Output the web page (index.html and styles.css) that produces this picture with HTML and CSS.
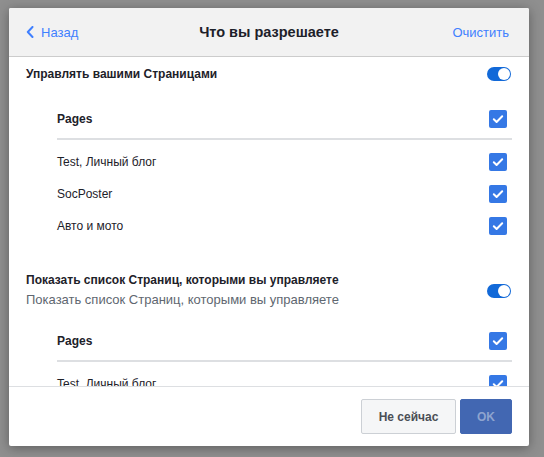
FILE: index.html
```html
<!DOCTYPE html>
<html lang="ru">
<head>
<meta charset="utf-8">
<title>Что вы разрешаете</title>
<link rel="stylesheet" href="styles.css">
</head>
<body>
<div class="dialog">
  <header class="dlg-head">
    <a class="back" href="#">
      <svg class="chev" width="8" height="12" viewBox="0 0 8 12"><path d="M6.5 1 L1.8 6 L6.5 11" fill="none" stroke="#4080ff" stroke-width="2" stroke-linecap="round" stroke-linejoin="round"/></svg>
      <span>Назад</span>
    </a>
    <h1 class="title">Что вы разрешаете</h1>
    <a class="clear" href="#">Очистить</a>
  </header>
  <main class="content">
    <section class="perm">
      <div class="perm-head">
        <div class="perm-text">
          <div class="perm-title">Управлять вашими Страницами</div>
        </div>
        <span class="toggle"><span class="knob"></span></span>
      </div>
      <div class="sub">
        <div class="sub-head">
          <span class="sub-name">Pages</span>
          <span class="cb"><svg width="18" height="18" viewBox="0 0 18 18"><path d="M4.8 9.3 L7.6 12 L13.2 6.3" fill="none" stroke="#fff" stroke-width="2" stroke-linecap="round" stroke-linejoin="round"/></svg></span>
        </div>
        <ul class="items">
          <li class="item"><span>Test, Личный блог</span><span class="cb"><svg width="18" height="18" viewBox="0 0 18 18"><path d="M4.8 9.3 L7.6 12 L13.2 6.3" fill="none" stroke="#fff" stroke-width="2" stroke-linecap="round" stroke-linejoin="round"/></svg></span></li>
          <li class="item"><span>SocPoster</span><span class="cb"><svg width="18" height="18" viewBox="0 0 18 18"><path d="M4.8 9.3 L7.6 12 L13.2 6.3" fill="none" stroke="#fff" stroke-width="2" stroke-linecap="round" stroke-linejoin="round"/></svg></span></li>
          <li class="item"><span>Авто и мото</span><span class="cb"><svg width="18" height="18" viewBox="0 0 18 18"><path d="M4.8 9.3 L7.6 12 L13.2 6.3" fill="none" stroke="#fff" stroke-width="2" stroke-linecap="round" stroke-linejoin="round"/></svg></span></li>
        </ul>
      </div>
    </section>
    <section class="perm perm-second">
      <div class="perm-head">
        <div class="perm-text">
          <div class="perm-title">Показать список Страниц, которыми вы управляете</div>
          <div class="perm-desc">Показать список Страниц, которыми вы управляете</div>
        </div>
        <span class="toggle"><span class="knob"></span></span>
      </div>
      <div class="sub">
        <div class="sub-head">
          <span class="sub-name">Pages</span>
          <span class="cb"><svg width="18" height="18" viewBox="0 0 18 18"><path d="M4.8 9.3 L7.6 12 L13.2 6.3" fill="none" stroke="#fff" stroke-width="2" stroke-linecap="round" stroke-linejoin="round"/></svg></span>
        </div>
        <ul class="items">
          <li class="item"><span>Test, Личный блог</span><span class="cb"><svg width="18" height="18" viewBox="0 0 18 18"><path d="M4.8 9.3 L7.6 12 L13.2 6.3" fill="none" stroke="#fff" stroke-width="2" stroke-linecap="round" stroke-linejoin="round"/></svg></span></li>
          <li class="item"><span>SocPoster</span><span class="cb"><svg width="18" height="18" viewBox="0 0 18 18"><path d="M4.8 9.3 L7.6 12 L13.2 6.3" fill="none" stroke="#fff" stroke-width="2" stroke-linecap="round" stroke-linejoin="round"/></svg></span></li>
        </ul>
      </div>
    </section>
  </main>
  <footer class="dlg-foot">
    <button class="btn btn-sec" type="button">Не сейчас</button>
    <button class="btn btn-ok" type="button">OK</button>
  </footer>
</div>
</body>
</html>
```
FILE: styles.css
```css
* { box-sizing: border-box; }
html, body { margin: 0; padding: 0; }
body {
  background: #8f8f8f;
  font-family: "Liberation Sans", Arial, sans-serif;
  color: #1d2129;
  width: 544px;
  height: 457px;
  overflow: hidden;
}
.dialog {
  margin: 8px 0 0 9px;
  width: 520px;
  height: 438px;
  background: #fff;
  display: flex;
  flex-direction: column;
  box-shadow: 0 2px 12px rgba(0,0,0,0.35);
  border-radius: 2px;
  overflow: hidden;
}
.dlg-head {
  height: 49px;
  flex: none;
  background: #f2f2f2;
  border-bottom: 1px solid #cccccc;
  display: flex;
  align-items: center;
  justify-content: space-between;
  padding: 0 20px 0 17px;
  position: relative;
}
.back {
  display: flex;
  align-items: center;
  gap: 7px;
  color: #4080ff;
  text-decoration: none;
  font-size: 13px;
}
.chev { display: block; }
.title {
  position: absolute;
  left: 0;
  right: 0;
  top: 0;
  bottom: 0;
  margin: 0;
  display: flex;
  align-items: center;
  justify-content: center;
  font-size: 14.5px;
  font-weight: bold;
  color: #1d2129;
  pointer-events: none;
}
.clear {
  color: #4080ff;
  text-decoration: none;
  font-size: 13px;
}
.content {
  flex: 1;
  overflow: hidden;
  padding: 0 17px 0 17px;
}
.perm { padding-top: 9px; }
.perm-second { padding-top: 30px; }
.perm-head {
  display: flex;
  align-items: center;
  justify-content: space-between;
  padding-right: 1px;
}
.perm-title {
  font-size: 12px;
  font-weight: bold;
  line-height: 16px;
}
.perm-desc {
  font-size: 13px;
  line-height: 18px;
  color: #606770;
  margin-top: 3px;
}
.toggle {
  width: 24px;
  height: 14px;
  border-radius: 7px;
  background: #1269d8;
  display: flex;
  align-items: center;
  justify-content: flex-end;
  padding-right: 1px;
  flex: none;
}
.knob {
  width: 12px;
  height: 12px;
  border-radius: 50%;
  background: #fff;
}
.sub { margin: 18px 0 0 31px; }
.perm-second .sub { margin-top: 13px; }
.sub-head {
  height: 40px;
  display: flex;
  align-items: center;
  justify-content: space-between;
  padding-right: 5px;
  border-bottom: 2px solid #dddfe2;
}
.sub-name {
  font-size: 12px;
  font-weight: bold;
}
.items {
  list-style: none;
  margin: 0;
  padding: 6px 0 0 0;
}
.item {
  height: 32px;
  display: flex;
  align-items: center;
  justify-content: space-between;
  padding-right: 5px;
  font-size: 12px;
}
.cb {
  width: 18px;
  height: 18px;
  border-radius: 2px;
  background: #3578e5;
  display: block;
  flex: none;
}
.cb svg { display: block; }
.dlg-foot {
  height: 60px;
  flex: none;
  border-top: 1px solid #dddfe2;
  display: flex;
  align-items: center;
  justify-content: flex-end;
  gap: 4px;
  padding: 0 17px;
}
.btn {
  height: 35px;
  border-radius: 2px;
  font-family: "Liberation Sans", Arial, sans-serif;
  font-size: 12px;
  font-weight: bold;
  padding: 0;
  cursor: pointer;
}
.btn-sec {
  width: 95px;
  background: #f5f6f7;
  border: 1px solid #ccd0d5;
  color: #4b4f56;
}
.btn-ok {
  width: 52px;
  background: #4267b2;
  border: 1px solid #4267b2;
  color: #8ea4cf;
}
```
